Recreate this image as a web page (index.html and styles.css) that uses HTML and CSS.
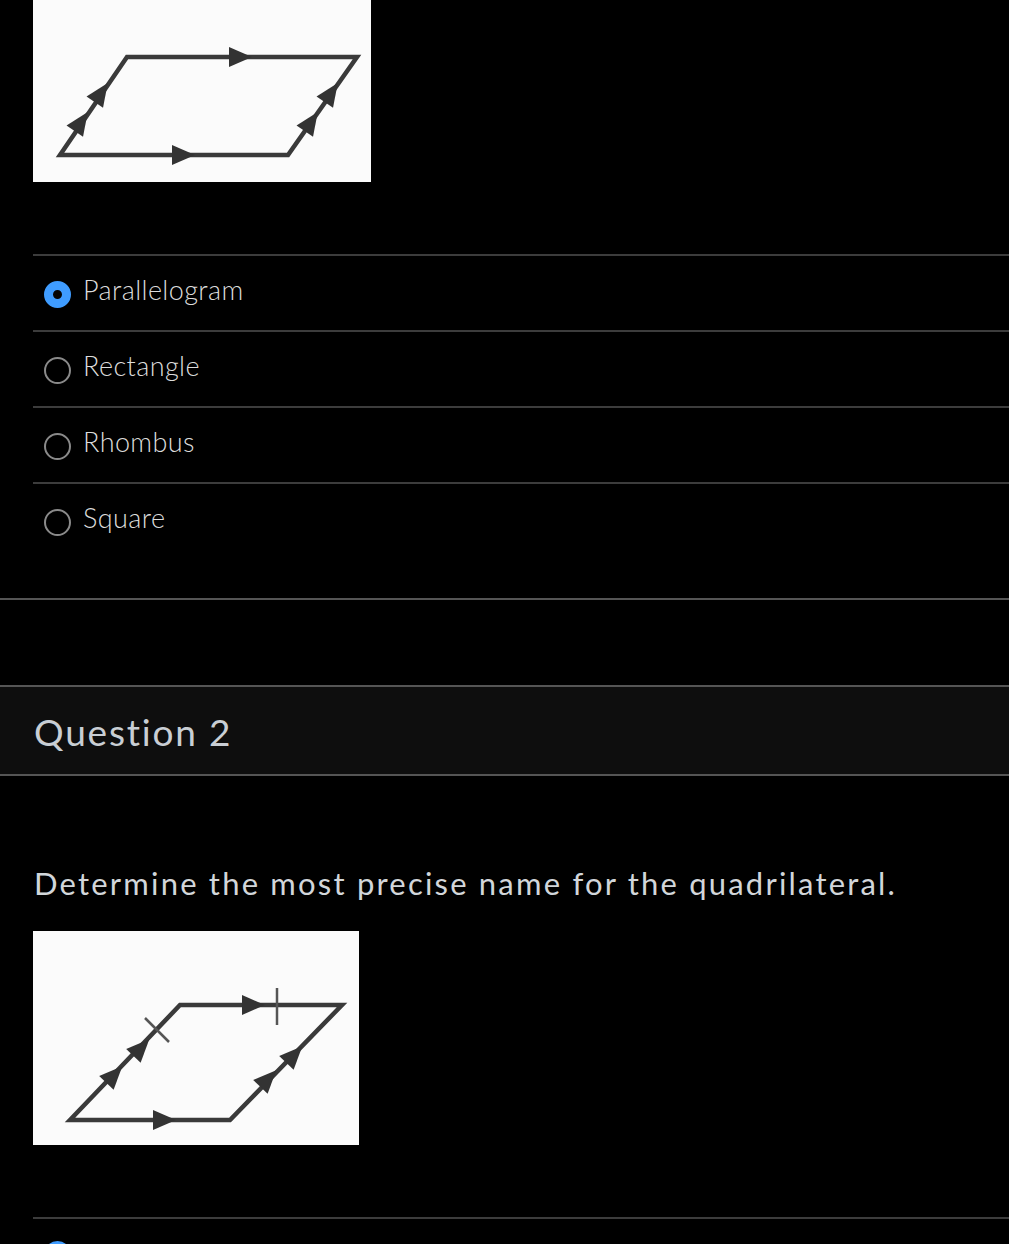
FILE: index.html
```html
<!DOCTYPE html>
<html lang="en">
<head>
<meta charset="utf-8">
<title>Quiz</title>
<link rel="stylesheet" href="styles.css">
</head>
<body>
<div class="page">
  <section class="question q1">
    <div class="content">
      <div class="figure fig1">
        <svg width="338" height="182" viewBox="0 0 338 182">
          <g stroke="#3a3a3a" stroke-width="4.5" fill="none" stroke-linejoin="miter">
            <polygon points="94,57 324,57 255,155 27,155"/>
          </g>
          <g fill="#333">
            <g transform="translate(207,57)"><polygon points="-11,-10 12,0 -11,10"/></g>
            <g transform="translate(150,155)"><polygon points="-11,-10 12,0 -11,10"/></g>
            <g transform="translate(68,93) rotate(-55.6)"><polygon points="-11,-10 12,0 -11,10"/></g>
            <g transform="translate(48,122) rotate(-55.6)"><polygon points="-11,-10 12,0 -11,10"/></g>
            <g transform="translate(298,93) rotate(-55.6)"><polygon points="-11,-10 12,0 -11,10"/></g>
            <g transform="translate(278,122) rotate(-55.6)"><polygon points="-11,-10 12,0 -11,10"/></g>
          </g>
        </svg>
      </div>
      <ul class="options">
        <li class="option"><span class="radio checked"></span><span class="label">Parallelogram</span></li>
        <li class="option"><span class="radio"></span><span class="label">Rectangle</span></li>
        <li class="option"><span class="radio"></span><span class="label">Rhombus</span></li>
        <li class="option"><span class="radio"></span><span class="label">Square</span></li>
      </ul>
    </div>
  </section>

  <section class="question q2">
    <header class="q-header"><h2>Question 2</h2></header>
    <div class="content">
      <p class="prompt">Determine the most precise name for the quadrilateral.</p>
      <div class="figure fig2">
        <svg width="326" height="214" viewBox="0 0 326 214">
          <g stroke="#3a3a3a" stroke-width="4.5" fill="none">
            <polygon points="147,74 309,74 197,189 37,189"/>
            <line x1="244" y1="57" x2="244" y2="94" stroke-width="2.5" stroke="#555"/>
            <line x1="112" y1="87" x2="136" y2="111" stroke-width="2.5" stroke="#555"/>
          </g>
          <g fill="#333">
            <g transform="translate(220,74)"><polygon points="-11,-10 12,0 -11,10"/></g>
            <g transform="translate(131,189)"><polygon points="-11,-10 12,0 -11,10"/></g>
            <g transform="translate(108,117) rotate(-46.3)"><polygon points="-11,-10 12,0 -11,10"/></g>
            <g transform="translate(81,144) rotate(-46.3)"><polygon points="-11,-10 12,0 -11,10"/></g>
            <g transform="translate(261,124) rotate(-46.3)"><polygon points="-11,-10 12,0 -11,10"/></g>
            <g transform="translate(235,148) rotate(-46.3)"><polygon points="-11,-10 12,0 -11,10"/></g>
          </g>
        </svg>
      </div>
      <ul class="options tight">
        <li class="option"><span class="radio checked"></span><span class="label">Parallelogram</span></li>
        <li class="option"><span class="radio"></span><span class="label">Rectangle</span></li>
      </ul>
    </div>
  </section>
</div>
</body>
</html>
```

FILE: styles.css
```css
html, body {
  margin: 0;
  padding: 0;
  background: #000;
}
body {
  font-family: Lato, "Open Sans", sans-serif;
  color: #d6d6d6;
  overflow: hidden;
  height: 1244px;
}
.page {
  width: 1009px;
}
.question {
  display: flex;
  flex-direction: column;
}
.q1 {
  border-bottom: 2px solid #555;
  padding-bottom: 40px;
}
.content {
  padding-left: 33px;
}
.figure {
  background: #fbfbfb;
  display: block;
}
.figure svg {
  display: block;
  filter: blur(0.7px);
}
.fig1 {
  width: 338px;
  height: 182px;
}
.fig2 {
  width: 326px;
  height: 214px;
}
.options {
  list-style: none;
  margin: 72px 0 0 0;
  padding: 0;
}
.option {
  display: flex;
  align-items: center;
  gap: 12px;
  height: 74px;
  border-top: 2px solid #3c3c3c;
  padding-left: 11px;
}
.options.tight .option {
  align-items: flex-start;
  padding-top: 20px;
  height: 54px;
}
.radio {
  box-sizing: border-box;
  width: 27px;
  height: 27px;
  border-radius: 50%;
  border: 2.5px solid #8a8a8a;
  flex: none;
  margin-top: 2px;
}
.radio.checked {
  border: 9px solid #3f9cff;
  background: #050505;
}
.label {
  font-size: 27px;
  font-weight: 300;
  color: #dcdcdc;
  letter-spacing: 0.4px;
  margin-top: -7px;
}
.options.tight .label {
  margin-top: 0;
}
.q2 {
  margin-top: 85px;
}
.q-header {
  background: #0e0e0e;
  border-top: 2px solid #555;
  border-bottom: 2px solid #555;
  height: 87px;
  display: flex;
  align-items: center;
  padding-left: 34px;
}
.q-header h2 {
  margin: 0;
  font-size: 37px;
  font-weight: 400;
  color: #c9ced4;
  letter-spacing: 1.8px;
  margin-top: 2px;
}
.prompt {
  margin: 87px 0 0 1px;
  font-size: 31px;
  font-weight: 400;
  color: #d2d6da;
  letter-spacing: 2.2px;
  line-height: 40px;
  height: 40px;
  white-space: nowrap;
}
.q2 .figure {
  margin-top: 28px;
}
```
